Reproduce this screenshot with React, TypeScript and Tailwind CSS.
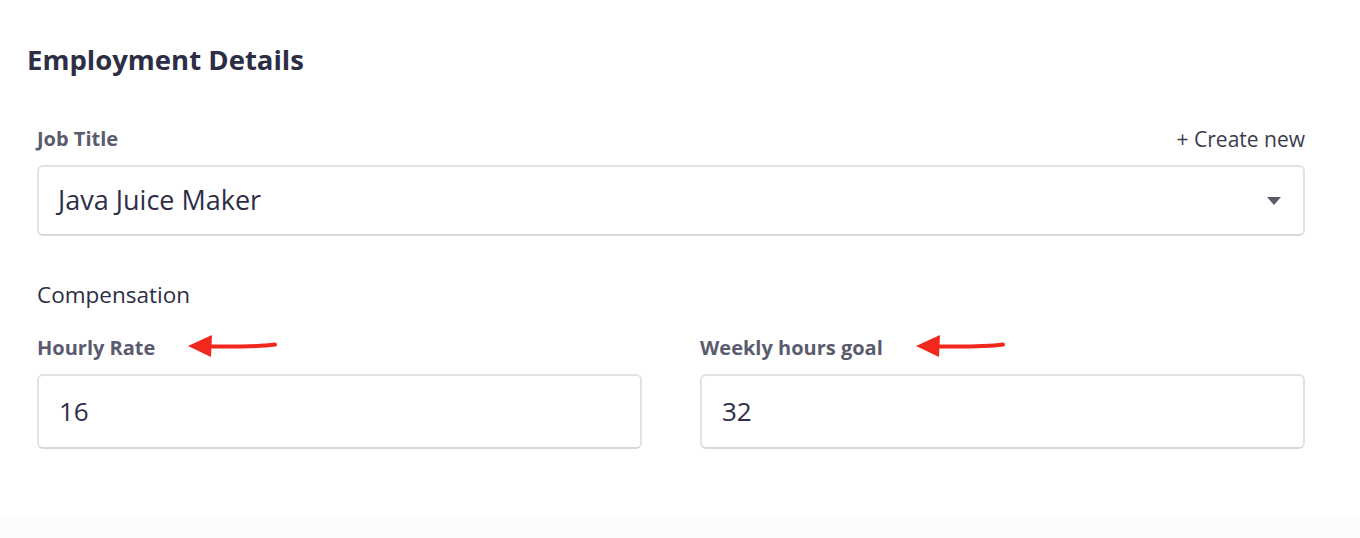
const font = { fontFamily: "'Open Sans', Lato, sans-serif" };

function Arrow() {
  return (
    <svg width="90" height="26" viewBox="0 0 90 26" className="shrink-0">
      <path d="M1 12 L25 1 L24 23 Z" fill="#f0281e" />
      <path d="M22 12.5 C45 12.8 70 13 88 10.5" stroke="#f0281e" strokeWidth="4" strokeLinecap="round" fill="none" />
    </svg>
  );
}

function Field({ label, value }: { label: string; value: string }) {
  return (
    <div className="flex-1">
      <div className="flex items-center h-[30px]">
        <span className="text-[20px] leading-[30px] font-bold text-[#5b5b70]">{label}</span>
        <span className="ml-[32px] mt-[-2px]">
          <Arrow />
        </span>
      </div>
      <div className="mt-[11px] h-[75px] rounded-[6px] border-2 border-[#e2e2e2] border-b-[#d8d8d8] flex items-center px-[20px] text-[26px] text-[#2e2e48]">
        {value}
      </div>
    </div>
  );
}

export default function App() {
  return (
    <div className="w-[1360px] h-[538px] bg-white overflow-hidden flex flex-col" style={font}>
      <div className="flex-1 px-[37px]">
        <h1 className="ml-[-10px] mt-[42px] text-[27.5px] font-bold text-[#2d2d46] leading-[36px]">
          Employment Details
        </h1>
        <div className="w-[1268px] mt-[46px]">
          <div className="flex justify-between items-center h-[30px]">
            <span className="text-[20px] leading-[30px] font-bold text-[#5b5b70]">Job Title</span>
            <span className="text-[21px] leading-[30px] text-[#3b3b4c]">+ Create new</span>
          </div>
          <div className="mt-[11px] h-[71px] rounded-[6px] border-2 border-[#e2e2e2] border-b-[#d8d8d8] flex items-center justify-between pl-[19px] pr-[22px]">
            <span className="text-[27px] text-[#2e2e48]">Java Juice Maker</span>
            <svg width="14" height="8" viewBox="0 0 14 8">
              <path d="M0 0 H14 L7 8 Z" fill="#5b5b70" />
            </svg>
          </div>
          <div className="mt-[44px] text-[22.5px] text-[#2d2d46] leading-[30px]">Compensation</div>
          <div className="mt-[23px] flex gap-[58px]">
            <Field label="Hourly Rate" value="16" />
            <Field label="Weekly hours goal" value="32" />
          </div>
        </div>
      </div>
      <div className="h-[20px] bg-[#fcfcfc]" />
    </div>
  );
}
